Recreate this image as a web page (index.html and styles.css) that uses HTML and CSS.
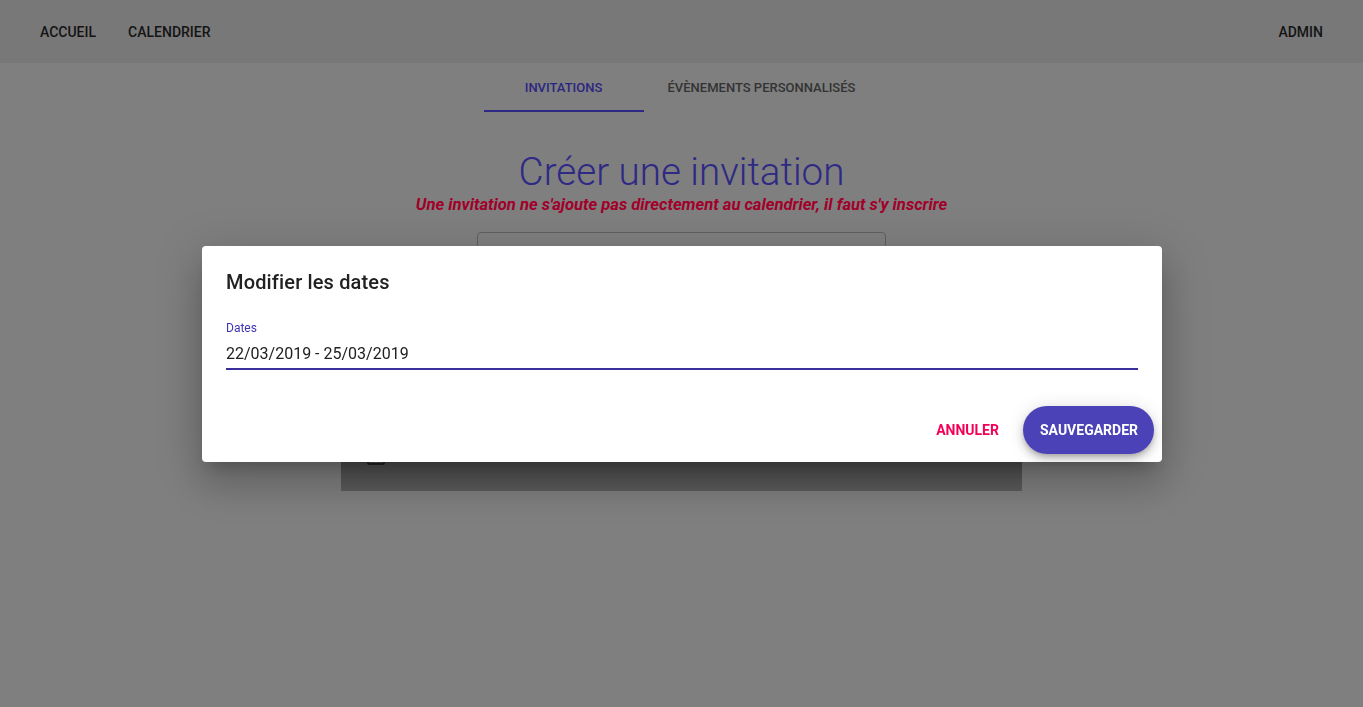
FILE: index.html
```html
<!DOCTYPE html>
<html lang="fr">
<head>
<meta charset="utf-8">
<title>Créer une invitation</title>
<link rel="stylesheet" href="styles.css">
</head>
<body>
<header class="topbar">
  <nav class="nav-left">
    <a class="nav-link">ACCUEIL</a>
    <a class="nav-link">CALENDRIER</a>
  </nav>
  <a class="nav-link">ADMIN</a>
</header>

<div class="tabs">
  <div class="tab active">INVITATIONS</div>
  <div class="tab">ÉVÈNEMENTS PERSONNALISÉS</div>
</div>

<main class="content">
  <h1 class="title">Créer une invitation</h1>
  <p class="warning">Une invitation ne s'ajoute pas directement au calendrier, il faut s'y inscrire</p>
  <div class="outlined-field"></div>
  <section class="card">
    <span class="checkbox"></span>
  </section>
</main>

<div class="backdrop">
  <div class="dialog">
    <h2 class="dialog-title">Modifier les dates</h2>
    <div class="field">
      <label class="field-label">Dates</label>
      <div class="field-value">22/03/2019 - 25/03/2019</div>
    </div>
    <div class="dialog-actions">
      <button class="btn-text">ANNULER</button>
      <button class="btn-primary">SAUVEGARDER</button>
    </div>
  </div>
</div>
</body>
</html>
```

FILE: styles.css
```css
* { box-sizing: border-box; }

html, body {
  margin: 0;
  height: 100%;
}

/* The page behind the modal is painted in its dimmed (backdrop) palette */
body {
  background: #7f7f7f;
  font-family: Roboto, "Liberation Sans", Arial, sans-serif;
  color: #141414;
  overflow: hidden;
}

.topbar {
  height: 63px;
  background: #787878;
  display: flex;
  align-items: center;
  justify-content: space-between;
  padding: 0 40px;
}

.nav-left {
  display: flex;
  gap: 32px;
}

.nav-link {
  font-size: 14px;
  font-weight: 500;
  color: #141414;
}

.tabs {
  display: flex;
  justify-content: center;
  height: 48px;
  margin-top: 1px;
}

.tab {
  min-width: 160px;
  padding: 1px 24px 0;
  display: flex;
  align-items: center;
  justify-content: center;
  font-size: 13px;
  font-weight: 500;
  color: #333333;
  border-bottom: 2px solid transparent;
}

.tab.active {
  color: #2b2780;
  border-bottom-color: #2d2884;
}

.content {
  display: flex;
  flex-direction: column;
  align-items: center;
}

.title {
  margin: 36px 0 0;
  font-size: 38.6px;
  font-weight: 300;
  line-height: 48px;
  color: #2e2984;
}

.warning {
  margin: -1px 0 0;
  font-size: 16.6px;
  font-weight: 700;
  font-style: italic;
  line-height: 20px;
  color: #a2002a;
}

.outlined-field {
  margin-top: 17px;
  width: 409px;
  height: 56px;
  border: 1px solid #5f5f5f;
  border-radius: 4px;
}

.card {
  margin-top: 10px;
  width: 681px;
  height: 193px;
  background: linear-gradient(#484848 80%, #5d5d5d);
  position: relative;
}

.checkbox {
  position: absolute;
  left: 26px;
  bottom: 26px;
  width: 18px;
  height: 18px;
  border: 2px solid #222;
  border-radius: 2px;
}

.backdrop {
  position: fixed;
  inset: 0;
  display: flex;
  align-items: center;
  justify-content: center;
}

.dialog {
  width: 960px;
  height: 216px;
  margin-left: 1px;
  background: #ffffff;
  border-radius: 4px;
  box-shadow: 0 11px 15px -7px rgba(0,0,0,.2), 0 24px 38px 3px rgba(0,0,0,.14), 0 9px 46px 8px rgba(0,0,0,.12);
  padding: 24px 24px 8px;
  display: flex;
  flex-direction: column;
}

.dialog-title {
  margin: 0;
  font-size: 20px;
  font-weight: 500;
  line-height: 24px;
  color: #212121;
  letter-spacing: 0.15px;
}

.field {
  margin-top: 26px;
  display: flex;
  flex-direction: column;
  border-bottom: 2px solid #3b2f9c;
  padding-bottom: 4px;
}

.field-label {
  font-size: 12px;
  line-height: 16px;
  color: #3d35b2;
}

.field-value {
  margin-top: 8px;
  font-size: 16px;
  line-height: 20px;
  color: #212121;
}

.dialog-actions {
  margin-top: 36px;
  margin-right: -16px;
  display: flex;
  justify-content: flex-end;
  align-items: center;
  gap: 12px;
}

.btn-text,
.btn-primary {
  font-family: inherit;
  font-size: 14px;
  font-weight: 700;
  height: 48px;
  border: 0;
  cursor: pointer;
}

.btn-text {
  background: transparent;
  color: #f50057;
  padding: 0 12px;
}

.btn-primary {
  background: #4a42b6;
  color: #ffffff;
  padding: 0 16px 0 17px;
  border-radius: 24px;
  box-shadow: 0 3px 5px -1px rgba(0,0,0,.2), 0 6px 10px 0 rgba(0,0,0,.14), 0 1px 18px 0 rgba(0,0,0,.12);
}
```
